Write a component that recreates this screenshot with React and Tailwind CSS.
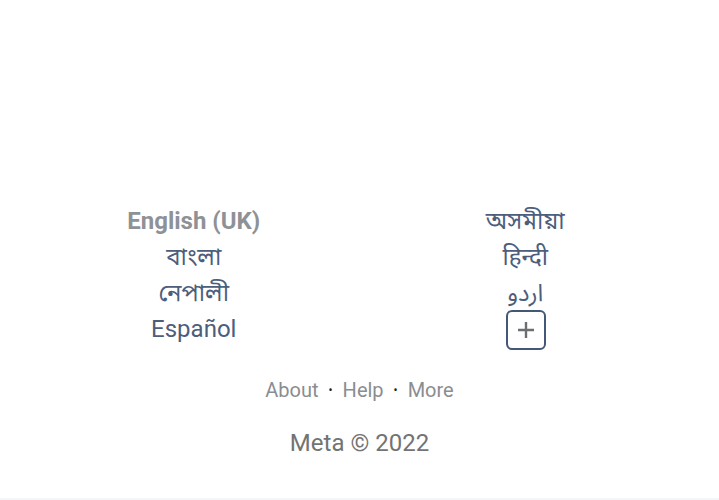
import React from "react";

const left = [
  { label: "English (UK)", active: true },
  { label: "বাংলা" },
  { label: "নেপালী" },
  { label: "Español" },
];

const right = ["অসমীয়া", "हिन्दी", "اردو"];

const LangItem = ({ label, active }) => (
  <div className="h-9 flex items-center justify-center">
    <span className={active ? "font-bold text-[#8e9297]" : "font-normal text-[#4d5d7c]"}>{label}</span>
  </div>
);

export default function App() {
  return (
    <div className="w-[719px] h-[500px] bg-white flex flex-col font-['Roboto','Noto_Sans','Noto_Sans_Bengali','Noto_Sans_Devanagari','Noto_Sans_Arabic',sans-serif] border-b-2 border-[#f5f6f7]">
      <div className="grid grid-cols-2 px-7 pt-[203px] text-[24px] leading-none">
        <div className="flex flex-col">
          {left.map((l) => (
            <LangItem key={l.label} label={l.label} active={l.active} />
          ))}
        </div>
        <div className="flex flex-col items-center">
          {right.map((l) => (
            <LangItem key={l} label={l} />
          ))}
          <div className="h-9 flex items-start justify-center">
            <button className="w-10 h-10 ml-[2px] -mt-[1px] border-2 border-[#435779] rounded-md flex items-center justify-center">
              <svg width="20" height="20" viewBox="0 0 20 20">
                <path d="M10 2v16M2 10h16" stroke="#6b6e73" strokeWidth="2.4" />
              </svg>
            </button>
          </div>
        </div>
      </div>

      <div className="mt-[33px] flex items-center justify-center gap-[10px] text-[20px] text-[#8a8d91] leading-none">
        <span>About</span>
        <span className="text-[#1c1e21] text-[12px]">•</span>
        <span>Help</span>
        <span className="text-[#1c1e21] text-[12px]">•</span>
        <span>More</span>
      </div>

      <div className="mt-[31px] text-center text-[24px] text-[#737373] leading-none">
        Meta © 2022
      </div>
    </div>
  );
}
